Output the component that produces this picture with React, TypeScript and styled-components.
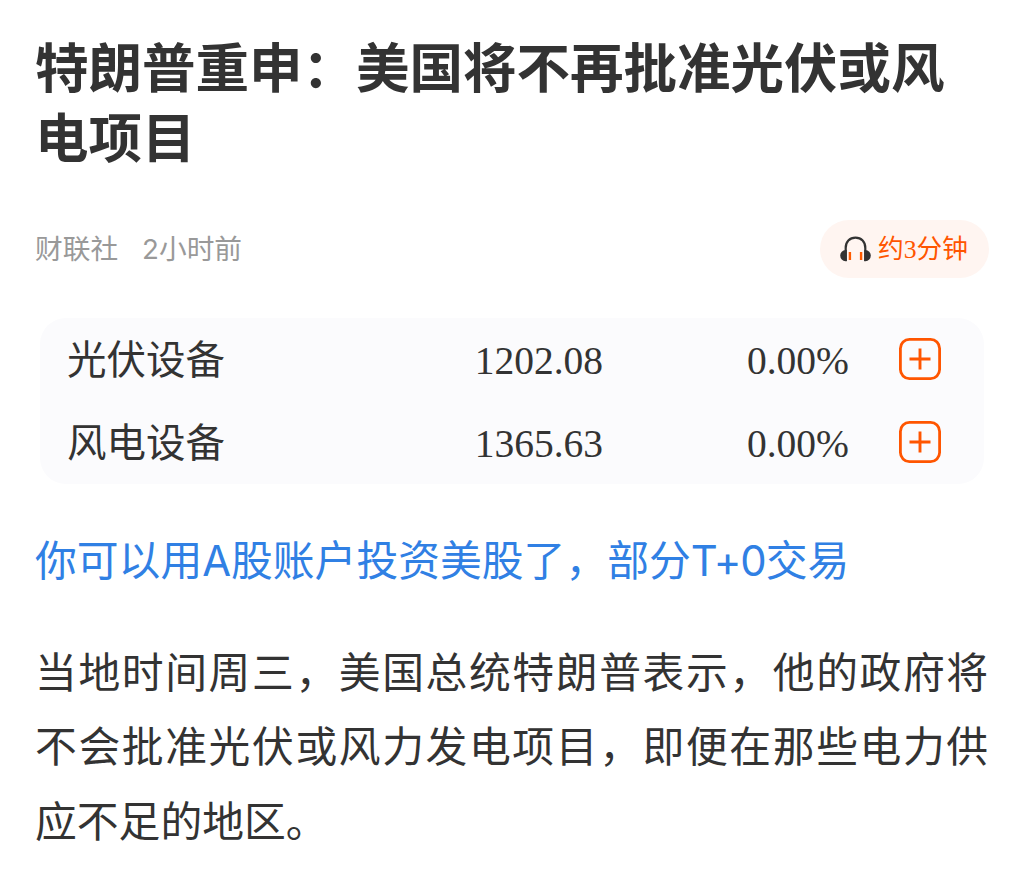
import styled, { createGlobalStyle } from "styled-components"

const GlobalStyle = createGlobalStyle`
  body {
    margin: 0;
    background: #fff;
    color: #333;
    font-family: Inter, "Noto Sans CJK SC", sans-serif;
  }
`

const quotes = [
  { name: "光伏设备", price: "1202.08", change: "0.00%" },
  { name: "风电设备", price: "1365.63", change: "0.00%" },
]

const HeadphonesIcon = () => (
  <svg width="31" height="26" viewBox="0 0 31 26" fill="none">
    <path
      d="M5.700 25V12C5.700 6 9.500 1.700 15.500 1.700S25.300 6 25.300 12v13"
      stroke="#333"
      strokeWidth="2.200"
    />
    <path d="M6.800 14v11.200H5.500a5.300 5.600 0 0 1 0-11.200z" fill="#333" />
    <path d="M24.200 14v11.200h1.300a5.300 5.600 0 0 0 0-11.200z" fill="#333" />
    <path d="M9.900 16v8M21.100 16v8" stroke="#ff5a00" strokeWidth="2.400" />
  </svg>
)

const PlusIcon = () => (
  <svg width="42" height="42" viewBox="0 0 42 42" fill="none" stroke="#ff5500">
    <rect x="1.400" y="1.400" width="39.200" height="39.200" rx="9" strokeWidth="2.800" />
    <path d="M21 10.500v21M10.500 21h21" strokeWidth="2.900" />
  </svg>
)

export default function App() {
  return (
    <Article>
      <GlobalStyle />
      <Title>
        特朗普重申：美国将不再批准光伏或风
        <br />
        电项目
      </Title>
      <Meta>
        <Source>
          <span>财联社</span>
          <span>2小时前</span>
        </Source>
        <ListenButton>
          <HeadphonesIcon />
          <Duration>约3分钟</Duration>
        </ListenButton>
      </Meta>
      <QuoteCard>
        {quotes.map((quote) => (
          <QuoteRow key={quote.name}>
            <QuoteName>{quote.name}</QuoteName>
            <Figure>{quote.price}</Figure>
            <Figure>{quote.change}</Figure>
            <AddButton aria-label="添加自选">
              <PlusIcon />
            </AddButton>
          </QuoteRow>
        ))}
      </QuoteCard>
      <PromoLink>
        你可以用A股账户投资美股了，部分<Tight>T+0</Tight>交易
      </PromoLink>
      <Body>
        <Line>当地时间周三，美国总统特朗普表示，他的政府将</Line>
        <Line>不会批准光伏或风力发电项目，即便在那些电力供</Line>
        <Line $last>应不足的地区。</Line>
      </Body>
    </Article>
  )
}

const Article = styled.article`
  box-sizing: border-box;
  width: 1024px;
  height: 877px;
  padding: 30px 35px 0;
  overflow: hidden;
`
const Title = styled.h1`
  margin: 0;
  font-family: "Noto Sans CJK SC", sans-serif;
  font-size: 53.500px;
  line-height: 70px;
  font-weight: 700;
  white-space: nowrap;
`
const Meta = styled.div`
  display: flex;
  align-items: center;
  justify-content: space-between;
  margin-top: 50px;
  height: 58px;
`
const Source = styled.div`
  display: flex;
  gap: 24px;
  color: #999;
  font-size: 27.700px;
  line-height: 40px;
`
const ListenButton = styled.button`
  display: flex;
  align-items: center;
  gap: 7px;
  box-sizing: border-box;
  width: 169px;
  height: 58px;
  padding: 0 20px;
  border: 0;
  border-radius: 29px;
  background: #fff5f1;
  color: #ff5500;
  font-family: "Liberation Serif", "Noto Sans CJK SC", serif;
  font-size: 25.700px;
  white-space: nowrap;
`
const Duration = styled.span`
  padding-bottom: 5px;
`
const QuoteCard = styled.div`
  width: 944px;
  margin: 40px 5px 0;
  border-radius: 26px;
  background: #fbfbfd;
`
const QuoteRow = styled.div`
  display: grid;
  grid-template-columns: 313px 223px 246px 42px;
  align-items: center;
  height: 83px;
  padding-left: 27px;
  font-family: "Liberation Serif", "Noto Sans CJK SC", serif;
  font-size: 39.500px;
`
const QuoteName = styled.span`
  padding-bottom: 6px;
`
const Figure = styled.span`
  padding-top: 2px;
  text-align: right;
`
const AddButton = styled.button`
  display: flex;
  margin: -2px -50px 0 50px;
  padding: 0;
  border: 0;
  background: none;
`
const PromoLink = styled.a`
  display: block;
  margin-top: 46px;
  color: #3080e4;
  font-size: 41.800px;
  line-height: 62px;
  white-space: nowrap;
`
const Tight = styled.span`
  letter-spacing: -1px;
`
const Body = styled.div`
  margin-top: 41px;
  font-family: "Noto Sans CJK SC", sans-serif;
  font-size: 41.800px;
`
const Line = styled.div<{ $last?: boolean }>`
  height: 74.400px;
  line-height: 74.400px;
  letter-spacing: ${({ $last }) => ($last ? "0" : "1.600px")};
  white-space: nowrap;
`
